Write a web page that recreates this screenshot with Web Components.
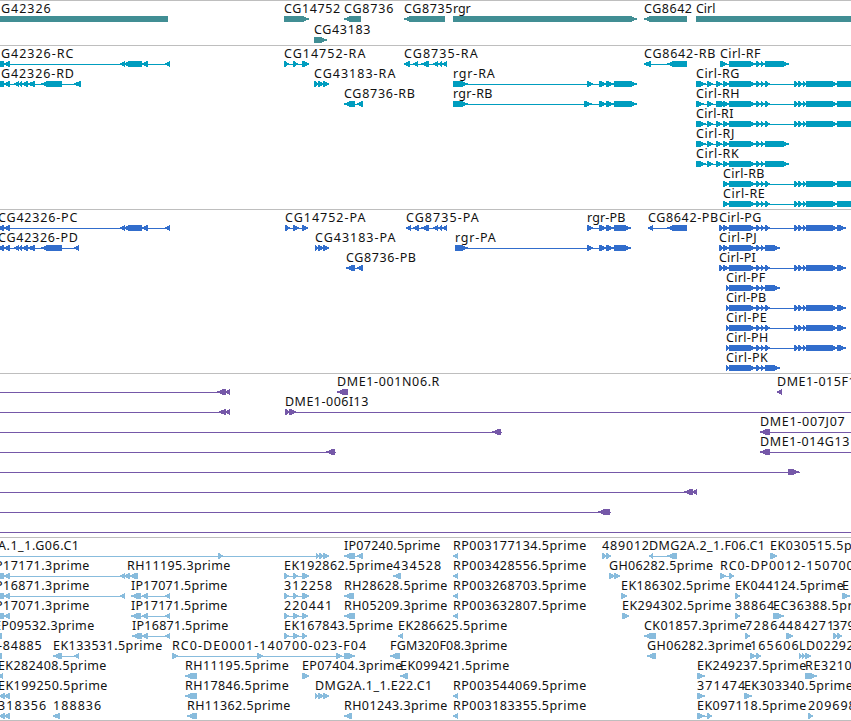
<!DOCTYPE html>
<html lang="en">
<head>
<meta charset="utf-8">
<title>Genome tracks</title>
<style>
    body { margin: 0; background: #fff; overflow: hidden; }
</style>
</head>
<body>
<genome-browser></genome-browser>

<script>
// One string per feature: label | label start | label end | strand | blocks | line
// A block ending in "=" is drawn without an arrow head
const CIRL = '729-756 756-761 761-765';
const CIRL_SHORT = CIRL + ' 765-789';
const CIRL_LONG = CIRL + ' 765-770 794-799 798-803 803-807 806-838 837-870';
const CIRL_P_SHORT = CIRL + ' 765-780';
const CIRL_P_LONG = CIRL + ' 765-770 794-799 798-803 803-807 806-838 837-846';
const RGR_END = '599-606 606-614 614-637';
const RGR_P_END = '587-593 599-606 606-614 614-631';

const TRACKS = [
    { color: '#418e94', height: 44, pitch: 21, rows: [
        ['G42326|1|50|<|0-168=', 'CG14752|284|339.5|>|284-309', 'CG8736|344|392.7|<|344-361',
         'CG8735|404|451.7|<|404-445', 'rgr|453|470|>|453-637', 'CG8642|644|691.3|<|644-687',
         'Cirl|696|714.7|>|696-860='],
        ['CG43183|314|369.7|>|314-327'],
    ] },
    { color: '#009dbf', height: 163, pitch: 20, rows: [
        ['G42326-RC|1|72.7|<|0-4= 4-10 120-125 123-142 142-148 165-170',
         'CG14752-RA|284|364.7|>|284-289 293-298 302-309',
         'CG8735-RA|404|477|<|404-410 413-418 421-429 433-438 438-442 442-447',
         'CG8642-RB|644|714.7|<|644-651 667-687',
         'Cirl-RF|720|759.7|>|720-727 ' + CIRL_SHORT],
        ['G42326-RD|1|73.3|<|0-4= 4-10 14-19 18-22 22-28 28-35 41-62 74-81',
         'CG43183-RA|314|394.7|>|314-319 318-324 323-329',
         'rgr-RA|453|494|>|453-468 587-593 ' + RGR_END,
         'Cirl-RG|696|738.7|>|696-706 707-713 716-722 723-729 ' + CIRL_LONG],
        ['CG8736-RB|344|414.3|<|344-355 357-363',
         'rgr-RB|453|491.7|>|453-468 584-592 ' + RGR_END,
         'Cirl-RH|696|738.7|>|696-704 707-713 716-727 723-729 ' + CIRL_LONG],
        ['Cirl-RI|696|732.7|>|696-706 707-713 716-722 723-729 ' + CIRL_LONG],
        ['Cirl-RJ|696|733.7|>|696-706 707-713 716-722 723-729 ' + CIRL_SHORT],
        ['Cirl-RK|696|738|>|696-706 707-713 716-722 723-729 ' + CIRL_SHORT],
        ['Cirl-RB|723|763.7|>|723-729 ' + CIRL_LONG],
        ['Cirl-RE|723|764|>|723-729 ' + CIRL_LONG],
    ] },
    { color: '#316dcc', height: 163, pitch: 20, rows: [
        ['CG42326-PC|-2|76.7|<|-2-4 4-10 120-125 123-142 142-148 165-170',
         'CG14752-PA|285|364.7|>|285-290 293-299 302-308',
         'CG8735-PA|406|478|<|406-411 413-419 421-429 433-438 438-442 442-447',
         'rgr-PB|587|624.7|>|' + RGR_P_END,
         'CG8642-PB|648|717.5|<|648-653 667-687',
         'Cirl-PG|719|760.7|>|719-724 723-729 ' + CIRL_P_LONG],
        ['CG42326-PD|-2|77.3|<|-2-4 4-10 14-19 18-22 22-28 28-35 41-62 74-79',
         'CG43183-PA|315|394.7|>|315-319 318-324 323-329',
         'rgr-PA|455|495|>|455-468 ' + RGR_P_END,
         'Cirl-PJ|719|756|>|719-724 723-729 ' + CIRL_P_SHORT],
        ['CG8736-PB|346|415.3|<|346-355 357-363', 'Cirl-PI|719|755|>|719-724 723-729 ' + CIRL_P_LONG],
        ['Cirl-PF|726|764.5|>|726-730 ' + CIRL_P_SHORT],
        ['Cirl-PB|726|765.5|>|726-730 ' + CIRL_P_LONG],
        ['Cirl-PE|726|766|>|726-730 ' + CIRL_P_LONG],
        ['Cirl-PH|726|767.5|>|726-730 ' + CIRL_P_LONG],
        ['Cirl-PK|726|767|>|726-730 ' + CIRL_P_SHORT],
    ] },
    { color: '#7558a8', height: 163, pitch: 20, rows: [
        ['|||<|217-226 225-230|0-230', 'DME1-001N06.R|337|438.7|<|337-348', 'DME1-015F1|777|855|<|777-782'],
        ['|||<|219-226 225-230|0-230', 'DME1-006I13|285|367.7|>|285-290 289-296|285-851'],
        ['|||<|492-501|0-502', 'DME1-007J07|760|844|<|760-770|760-851'],
        ['|||<|326-335|0-336', 'DME1-014G13|760|848.7|<|760-770|760-851'],
        ['|||>|788-799|0-800'],
        ['|||<|684-693 692-697|0-697'],
        ['|||<|598-610|0-611'],
        ['|||>||0-851'],
    ] },
    { color: '#88bcdd', height: 182, pitch: 20, rows: [
        ['A.1_1.G06.C1|-2|78.3|>|218-223 316-320 319-324 323-329|0-329',
         'IP07240.5prime|344|439.5|<|344-355 357-363', 'RP003177134.5prime|453|585.5|<|453-458',
         '489012|602|648.3|>|602-607 606-611', 'DMG2A.2_1.F06.C1|649|764.3|<|649-653 667-677',
         'EK030515.5p|770|851|>|770-777'],
        ['P17171.3prime|-5|88.7|<|0-4= 4-10 120-125 124-130 129-138', 'RH11195.3prime|127|229.7|<|',
         'EK192862.5prime|284|392.3|>|284-289 293-298 302-309', '434528|393|440.5|<|393-401',
         'RP003428556.5prime|453|585.5|<|453-458', 'GH06282.5prime|609|712.3|>|609-615 614-620',
         'RC0-DP0012-150700|720|853|>|720-726 729-734'],
        ['P16871.3prime|-5|88.7|<|0-4= 4-10 120-125', 'IP17071.5prime|131|226.7|<|131-141 142-148 165-170',
         '312258|284|331.5|>|284-289 293-298 302-309', 'RH28628.5prime|344|446.7|<|344-354',
         'RP003268703.5prime|453|585.5|<|453-458', 'EK186302.5prime|621|729.5|>|621-627',
         'EK044124.5prime|735|843|>|735-740', 'EK|842|858|>|842-850'],
        ['P17071.3prime|-5|88.7|<|0-4= 4-10', 'IP17171.5prime|131|226.7|<|131-141 142-148 165-170',
         '220441|284|331.5|>|284-289 293-299 302-308', 'RH05209.3prime|344|446.7|<|344-355',
         'RP003632807.5prime|453|585.5|<|453-458', 'EK294302.5prime|622|730.5|>|622-629',
         '38864|735|773.5|>|735-740', 'EC36388.5pr|773|852|>|773-784'],
        ['EP09532.3prime|-6|93.5|<|0-2=', 'IP16871.5prime|132|227.7|<|132-142 142-148 165-170',
         'EK167843.5prime|284|392.3|>|284-289 293-299 302-307', 'EK286625.5prime|398|506.5|<|398-403',
         'CK01857.3prime|644|745.5|<|644-656', '72864|745|785|>|745-750',
         '484271|786|833.5|>|786-793', '379|832.5|854|>|833-838 837-842'],
        ['-84885|-2|41|<|0-2=', 'EK133531.5prime|53|161.5|<|53-62 74-79',
         'RC0-DE0001-140700-023-F04|172|365.5|>|172-178 257-263 336-342 344-355',
         'FGM320F08.3prime|390|506.5|<|390-400', 'GH06282.3prime|647|751|<|647-656',
         '165606|750|798|>|750-756 756-761', 'LD02292|799|853|>|799-803 802-806 805-811'],
        ['EK282408.5prime|-2|105.7|<|-2-3', 'RH11195.5prime|185|288|<|185-197',
         'EP07404.3prime|302|401.5|>|302-309', 'EK099421.5prime|400|508.5|<|400-408',
         'EK249237.5prime|697|805.5|>|697-705', 'RE3210|805|851|>|805-817'],
        ['EK199250.5prime|-2|106.7|<|-1-5 4-10', 'RH17846.5prime|185|288|<|185-197',
         'DMG2A.1_1.E22.C1|315|431.5|>|315-319 318-324 323-329', 'RP003544069.5prime|453|585.5|<|453-458',
         '371474|697|744.5|>|697-705', 'EK303340.5prime|744|852|>|744-752'],
        ['318356|-2|45.5|<|-1-5 4-10', '188836|53|100.5|<|53-60', 'RH11362.5prime|187|289.7|<|187-197',
         'RH01243.3prime|344|446.7|<|344-352', 'RP003183355.5prime|453|585.5|<|453-458',
         'EK097118.5prime|697|805.5|>|697-705 707-712', '209698|808|855|>|808-813'],
    ] },
];

class FeatureRow extends HTMLElement {
    constructor() {
        super();
        this.attachShadow({ mode: 'open' });
    }

    set features(list) {
        this.shadowRoot.innerHTML = /*html*/`
        <style>
            :host { display: block; height: var(--pitch, 20px); }
            svg { display: block; width: 100%; height: 22px; overflow: visible; }
            text { fill: #111; font: 12.5px "Noto Sans", sans-serif; }
            rect, polygon { fill: var(--feature-color); shape-rendering: crispEdges; }
        </style>
        <svg>${list.map(f => this.drawFeature(f)).join('')}</svg>
        `;
    }

    drawFeature(feature) {
        // features without a label start with three bars
        const [label, x, end, strand, blocks, line] = feature.split('|');
        const exons = (blocks || '').split(' ').filter(Boolean).map(b => {
            const [, from, to, flat] = b.match(/^(-?\d+)-(\d+)(=?)$/);
            return { from: +from, to: +to, flat: !!flat };
        });
        let out = '';
        if (line || exons.length > 1) {
            const [from, to] = line ? line.split('-').map(Number) : [exons[0].from, exons[exons.length - 1].to];
            out += `<rect x="${from}" y="18" width="${to - from}" height="1"/>`;
        }
        out += exons.map(e => this.drawBlock(e, strand)).join('');
        if (label) {
            out += `<text x="${x}" y="12" textLength="${(end - x + 0.7).toFixed(1)}">${label}</text>`;
        }
        return out;
    }

    // The head narrows to a 2px tip; short blocks get a blunter one
    drawBlock({ from, to, flat }, strand) {
        if (flat) return `<rect x="${from}" y="15" width="${to - from}" height="6"/>`;
        const short = to - from < 8;
        const head = short ? to - from - 1 : 6;
        const a = short ? 3 : 4;
        const b = short ? 1 : 2;
        const [tail, tip, d] = strand === '>' ? [from, to, 1] : [to, from, -1];
        const s = n => tip - d * n;
        return `<polygon points="${tail},15 ${s(head)},15 ${s(a)},16 ${s(b)},17 ${tip},17 ${tip},19 ${s(b)},19 ${s(a)},20 ${s(head)},21 ${tail},21"/>`;
    }
}

class GenomeTrack extends HTMLElement {
    constructor() {
        super();
        this.attachShadow({ mode: 'open' });
        this.shadowRoot.innerHTML = /*html*/`
        <style>
            :host { display: flex; flex-direction: column; box-sizing: content-box; border-top: 1px solid #bebebe; }
        </style>
        <slot></slot>
        `;
    }
}

class GenomeBrowser extends HTMLElement {
    constructor() {
        super();
        this.attachShadow({ mode: 'open' });
    }

    connectedCallback() {
        this.shadowRoot.innerHTML = /*html*/`
        <style>
            :host { display: block; width: 851px; height: 720px; overflow: hidden; border-bottom: 1px solid #bebebe; }
        </style>
        `;
        TRACKS.forEach(({ color, height, pitch, rows }) => {
            const track = document.createElement('genome-track');
            track.style.height = `${height}px`;
            track.style.setProperty('--feature-color', color);
            track.style.setProperty('--pitch', `${pitch}px`);
            rows.forEach(features => {
                const row = document.createElement('feature-row');
                row.features = features;
                track.append(row);
            });
            this.shadowRoot.append(track);
        });
    }
}

customElements.define('feature-row', FeatureRow);
customElements.define('genome-track', GenomeTrack);
customElements.define('genome-browser', GenomeBrowser);
</script>
</body>
</html>
